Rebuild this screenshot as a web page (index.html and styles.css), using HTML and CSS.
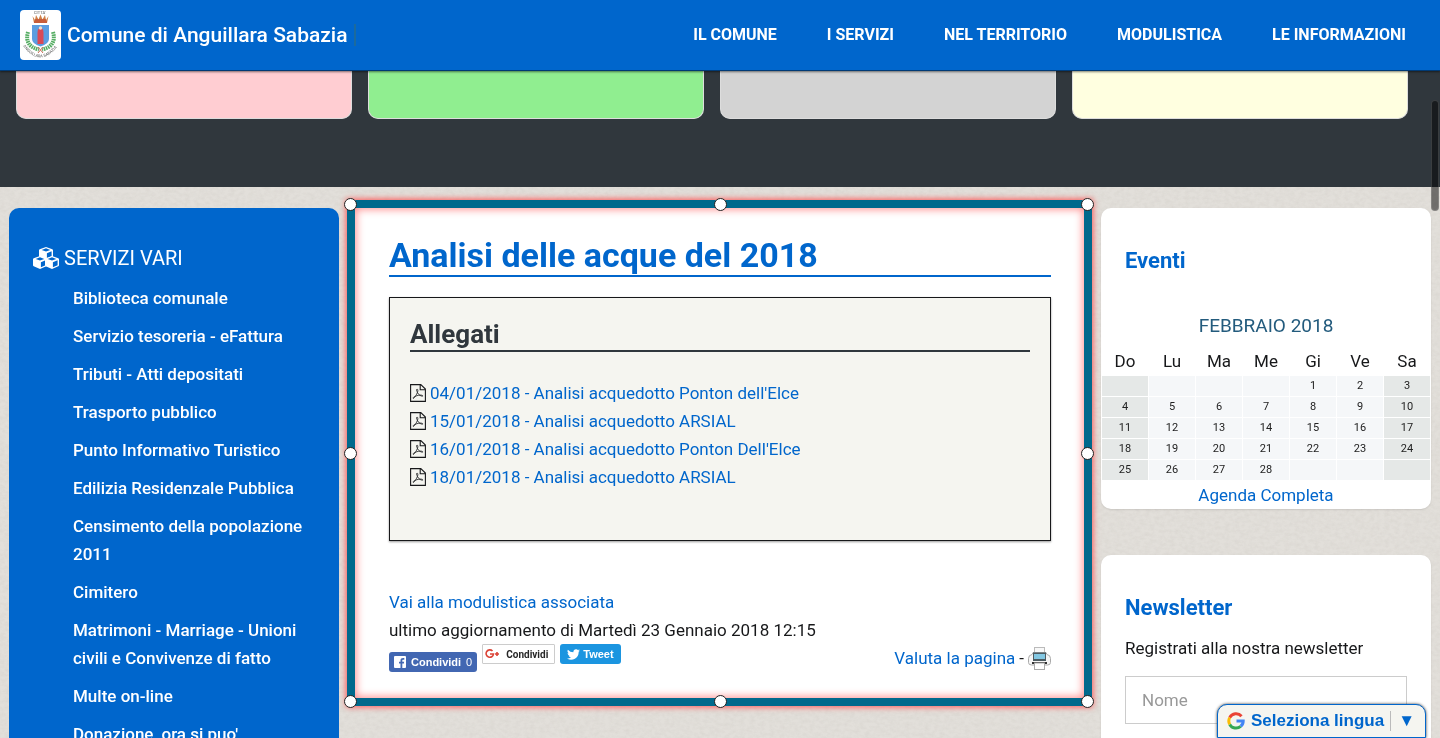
FILE: index.html
```html
<!DOCTYPE html>
<html lang="it">
<head>
  <meta charset="UTF-8">
  <title>Comune di Anguillara Sabazia</title>
  <meta name="viewport" content="width=device-width, initial-scale=1.0">
  <link rel="stylesheet" href="styles.css">
</head>
<body>
  <svg class="sprite" aria-hidden="true">
    <symbol id="pdf" viewBox="0 0 16 18">
      <path d="M.6.6h10.200l4.600 4.400v12.400H.6z M10.200.8v5h5" fill="none" stroke="currentColor" stroke-width="1.100"/>
      <path d="M7 5.200c2 0 .5 5-3.500 9.300-1-.2-.5-1.500 3-2.700s6.500-.8 6.300.3c-1.300.4-4.300-1-5.300-3.500S6.200 5.400 7 5.200z" fill="none" stroke="currentColor" stroke-width=".8"/>
    </symbol>
    <symbol id="cube" viewBox="0 0 14 13">
      <path d="M7 0l6.300 2.300q.7.300.7 1v5.900q0 .7-.7 1L7 13 .7 10.200q-.7-.3-.7-1V3.300q0-.7.7-1z" fill="#fff"/>
      <path d="M7 1.300l4.300 1.600L7 4.600 2.700 2.900z M7.900 6.200l4.700-1.900v4.900l-4.700 2z" fill="#06c"/>
    </symbol>
  </svg>

  <!-- stone texture behind the columns -->
  <svg class="texture" aria-hidden="true">
    <filter id="stone">
      <feTurbulence type="fractalNoise" baseFrequency=".2 .3" numOctaves="4" seed="3"/>
      <feColorMatrix values="0 0 0 0 .45  0 0 0 0 .42  0 0 0 0 .38  .25 0 0 0 -.09"/>
    </filter>
    <rect width="100%" height="100%" filter="url(#stone)"/>
  </svg>

  <header class="topbar">
    <a href="#" class="brand">
      <svg class="crest" viewBox="0 0 41 50" aria-hidden="true">
        <path id="scroll" d="M3 36Q20 59 38 36" fill="none"/>
        <text x="14" y="4" class="crest-text">CITTA'</text>
        <path d="M12.500 6l2.500 4 1-5 2.500 4.500 2-5 2 5L25 5l1 5 2.500-4-1.500 7H14z" fill="#cf8148"/>
        <path d="M14 12h13M15 10h11" stroke="#c0392b"/>
        <path d="M12 15h17v14q0 5-8.500 7.500Q12 34 12 29z" fill="#5b9de0"/>
        <path d="M17.500 23q0-5 3-5t3 5v11h-6z" fill="#d94a57"/>
        <circle cx="20.500" cy="18" r="1.700" fill="#f2dcc8"/>
        <path d="M8 22Q4 36 19 39.500M33 22Q37 36 22 39.500" fill="none" stroke="#55ad63" stroke-width="4" stroke-dasharray="1.600 .7"/>
        <path d="M18 37l5 6m0-6l-5 6" stroke="#d26b5b"/>
        <text class="crest-text"><textPath href="#scroll">ANGUILLARA SABAZIA</textPath></text>
      </svg>
      <span>Comune di Anguillara Sabazia</span>
      <i class="brand-line"></i>
    </a>
    <nav class="main-nav">
      <a href="#">IL COMUNE</a>
      <a href="#">I SERVIZI</a>
      <a href="#">NEL TERRITORIO</a>
      <a href="#">MODULISTICA</a>
      <a href="#">LE INFORMAZIONI</a>
    </nav>
  </header>

  <section class="banner">
    <div class="tile pink"></div>
    <div class="tile green"></div>
    <div class="tile grey"></div>
    <div class="tile yellow"></div>
  </section>

  <div class="columns">
    <aside class="services">
      <h2>
        <svg class="cubes" viewBox="0 0 26 22" aria-hidden="true">
          <use href="#cube" x="6" y="0" width="14" height="13"/>
          <use href="#cube" x="0" y="9" width="14" height="13"/>
          <use href="#cube" x="12" y="9" width="14" height="13"/>
        </svg>
        SERVIZI VARI
      </h2>
      <ul>
        <li><a href="#">Biblioteca comunale</a></li>
        <li><a href="#">Servizio tesoreria - eFattura</a></li>
        <li><a href="#">Tributi - Atti depositati</a></li>
        <li><a href="#">Trasporto pubblico</a></li>
        <li><a href="#">Punto Informativo Turistico</a></li>
        <li><a href="#">Edilizia Residenzale Pubblica</a></li>
        <li><a href="#">Censimento della popolazione 2011</a></li>
        <li><a href="#">Cimitero</a></li>
        <li><a href="#">Matrimoni - Marriage - Unioni civili e Convivenze di fatto</a></li>
        <li><a href="#">Multe on-line</a></li>
        <li><a href="#">Donazione, ora si puo'</a></li>
      </ul>
    </aside>

    <main class="content">
      <h1>Analisi delle acque del 2018</h1>
      <section class="attachments">
        <h2>Allegati</h2>
        <ul>
          <li><svg class="pdf"><use href="#pdf"/></svg><a href="#">04/01/2018 - Analisi acquedotto Ponton dell'Elce</a></li>
          <li><svg class="pdf"><use href="#pdf"/></svg><a href="#">15/01/2018 - Analisi acquedotto ARSIAL</a></li>
          <li><svg class="pdf"><use href="#pdf"/></svg><a href="#">16/01/2018 - Analisi acquedotto Ponton Dell'Elce</a></li>
          <li><svg class="pdf"><use href="#pdf"/></svg><a href="#">18/01/2018 - Analisi acquedotto ARSIAL</a></li>
        </ul>
      </section>
      <a href="#">Vai alla modulistica associata</a>
      <div>ultimo aggiornamento di Martedì 23 Gennaio 2018 12:15</div>
      <div class="page-tools">
        <div class="share">
          <button type="button" class="facebook">
            <svg width="12" height="12" viewBox="0 0 12 12" aria-hidden="true">
              <rect width="12" height="12" rx="1" fill="#fff"/>
              <path d="M8.300 12V7.500h1.600l.2-1.800H8.300V4.600c0-.6.2-.9 1-.9h1V2.100C8 1.800 6.500 2.300 6.500 4.400v1.300H5v1.800h1.500V12z" fill="#4267b2"/>
            </svg>
            <b>Condividi</b> <span>0</span>
          </button>
          <button type="button" class="gplus">
            <svg width="15" height="10" viewBox="0 0 15 10" fill="none" stroke="#db4437" stroke-width="1.600" aria-hidden="true">
              <path d="M7.500 2A3.700 3.700 0 1 0 8.500 5H5M10 5h4M12 3v4"/>
            </svg>
            <b>Condividi</b>
          </button>
          <button type="button" class="twitter">
            <svg width="13" height="11" viewBox="0 0 24 20" aria-hidden="true">
              <path d="M24 2.400a10 10 0 0 1-2.800.8A5 5 0 0 0 23.300.5a10 10 0 0 1-3.100 1.200A5 5 0 0 0 11.800 6 14 14 0 0 1 1.700 1a5 5 0 0 0 1.500 6.600A5 5 0 0 1 1 7a5 5 0 0 0 3.900 4.800 5 5 0 0 1-2.200.1 5 5 0 0 0 4.600 3.400A10 10 0 0 1 0 17.500a14 14 0 0 0 21.500-12.500A10 10 0 0 0 24 2.400z" fill="#fff"/>
            </svg>
            <b>Tweet</b>
          </button>
        </div>
        <div class="rate">
          <a href="#">Valuta la pagina</a> -
          <svg width="23" height="23" viewBox="0 0 23 23" role="img" aria-label="Stampa">
            <rect x="6.500" y=".5" width="10" height="8" fill="#f8f8f8" stroke="#bbb"/>
            <path d="M5 5.500h13l1 2q3.500.5 3.500 4v4q0 2.500-3 2.500h-16q-3 0-3-2.500v-4q0-3.500 3.500-4z" fill="#f5f5f5" stroke="#aaa"/>
            <rect x="5" y="5.500" width="13" height="8.500" fill="#4c5a60"/>
            <rect x="6" y="7" width="11" height="5" fill="#82c7e2"/>
            <path d="M4 16h15" stroke="#333" stroke-width="2"/>
            <rect x="6.500" y="16" width="10" height="6.500" fill="#fff" stroke="#aaa"/>
          </svg>
        </div>
      </div>
      <i class="handle top left"></i>
      <i class="handle top center"></i>
      <i class="handle top right"></i>
      <i class="handle middle left"></i>
      <i class="handle middle right"></i>
      <i class="handle bottom left"></i>
      <i class="handle bottom center"></i>
      <i class="handle bottom right"></i>
    </main>

    <aside class="side">
      <section class="card events">
        <h2>Eventi</h2>
        <table class="calendar">
          <caption>FEBBRAIO 2018</caption>
          <thead>
            <tr><th>Do</th><th>Lu</th><th>Ma</th><th>Me</th><th>Gi</th><th>Ve</th><th>Sa</th></tr>
          </thead>
          <tbody>
            <tr><td></td><td></td><td></td><td></td><td>1</td><td>2</td><td>3</td></tr>
            <tr><td>4</td><td>5</td><td>6</td><td>7</td><td>8</td><td>9</td><td>10</td></tr>
            <tr><td>11</td><td>12</td><td>13</td><td>14</td><td>15</td><td>16</td><td>17</td></tr>
            <tr><td>18</td><td>19</td><td>20</td><td>21</td><td>22</td><td>23</td><td>24</td></tr>
            <tr><td>25</td><td>26</td><td>27</td><td>28</td><td></td><td></td><td></td></tr>
          </tbody>
        </table>
        <a href="#" class="agenda">Agenda Completa</a>
      </section>
      <section class="card newsletter">
        <h2>Newsletter</h2>
        <label for="nome">Registrati alla nostra newsletter</label>
        <input type="text" id="nome" placeholder="Nome">
      </section>
    </aside>
  </div>

  <button type="button" class="language">
    <svg width="18" height="18" viewBox="0 0 18 18" fill="none" stroke-width="3" aria-hidden="true">
      <path d="M14.500 4.200A7.200 7.200 0 0 0 2.700 5.600" stroke="#ea4335"/>
      <path d="M2.700 5.600a7.200 7.200 0 0 0 0 6.800" stroke="#fbbc05"/>
      <path d="M2.700 12.400a7.200 7.200 0 0 0 11 1.900" stroke="#34a853"/>
      <path d="M13.700 14.300Q16.200 12.500 16.200 9H9.500" stroke="#4285f4"/>
    </svg>
    <span>Seleziona lingua</span>
    <span class="arrow">▼</span>
  </button>
  <i class="scroll-thumb"></i>
</body>
</html>
```
FILE: styles.css
```css
* {
  box-sizing: border-box;
}

body {
  margin: 0;
  height: 100vh;
  overflow: hidden;
  background-color: #e2dfda;
  color: #17181a;
  font: 17px/28px Roboto, "Liberation Sans", sans-serif;
}

a {
  color: #06c;
  text-decoration: none;
}

ul {
  list-style: none;
  margin: 0;
  padding: 0;
}

h1,
h2 {
  margin: 0;
}

.sprite {
  display: none;
}

.texture {
  position: fixed;
  inset: 0;
  z-index: -1;
  width: 100%;
  height: 100%;
}

/* header */
.topbar {
  position: relative;
  z-index: 2;
  display: flex;
  align-items: center;
  justify-content: space-between;
  height: 71px;
  padding: 0 34px 0 20px;
  background: #06c;
  border-bottom: 1px solid #003a75;
  box-shadow: 0 1px 2px rgba(0, 0, 0, 0.5);
}

.brand {
  display: flex;
  align-items: center;
  gap: 6px;
  color: #fff;
  font-size: 21px;
  font-weight: 500;
}

.crest {
  width: 41px;
  height: 50px;
  background: #fff;
  border-radius: 4px;
}

.crest-text {
  font-size: 4px;
  fill: #777;
}

.brand-line {
  width: 2px;
  height: 22px;
  background: #1c6a9c;
}

.main-nav {
  display: flex;
  gap: 50px;
}

.main-nav a {
  color: #fff;
  font-size: 16px;
  font-weight: 700;
}

.banner {
  display: flex;
  gap: 16px;
  height: 116px;
  padding: 0 32px 68px 16px;
  background: #30373d;
}

.tile {
  flex: 1;
  border: 1px solid #ddd;
  border-top: 0;
  border-radius: 0 0 10px 10px;
}

.pink {
  background: #ffcdd2;
}

.green {
  background: #90ee90;
}

.grey {
  background: #d3d3d3;
}

.yellow {
  background: #ffffe0;
}

/* columns */
.columns {
  display: flex;
  align-items: flex-start;
  padding: 13px 9px 0;
}

.services,
.side {
  flex: 0 0 330px;
  margin-top: 8px;
}

.services {
  padding: 36px 32px 0 24px;
  background: #06c;
  border-radius: 10px 10px 0 0;
}

.services h2 {
  display: flex;
  align-items: center;
  gap: 5px;
  color: #fff;
  font-size: 20px;
  font-weight: 400;
}

.cubes {
  width: 26px;
  height: 22px;
}

.services ul {
  padding: 12px 0 0 40px;
}

.services li {
  margin-bottom: 10px;
}

.services a {
  color: #fff;
  font-weight: 500;
}

.content {
  position: relative;
  flex: 1;
  margin: 0 9px 0 8px;
  padding: 27px 33px 26px 34px;
  background: #fff;
  border: 8px solid #00698c;
  box-shadow: 0 0 6px 1px #f55, inset 0 0 8px 1px #f88;
}

.content h1 {
  margin-bottom: 20px;
  color: #06c;
  border-bottom: 2px solid #06c;
  font-size: 34px;
  line-height: 40px;
}

.attachments {
  margin-bottom: 47px;
  padding: 20px 20px 49px;
  background: #f5f5f0;
  border: 1px solid #17181a;
  box-shadow: 0 1px 2px rgba(0, 0, 0, 0.4);
}

.attachments h2 {
  margin-bottom: 27px;
  color: #30373d;
  border-bottom: 2px solid #30373d;
  font-size: 26px;
  line-height: 32px;
}

.attachments li {
  display: flex;
  align-items: center;
  gap: 4px;
}

.pdf {
  width: 16px;
  height: 18px;
}

.page-tools,
.share,
.share button,
.rate {
  display: flex;
  align-items: center;
}

.page-tools {
  justify-content: space-between;
}

.share {
  align-items: flex-start;
  gap: 5px;
  height: 28px;
}

.share button {
  height: 20px;
  border: 0;
  border-radius: 3px;
  white-space: nowrap;
}

.share .facebook {
  align-self: flex-end;
  gap: 5px;
  padding: 0 5px;
  color: #fff;
  background: #4267b2;
  font: 11px "Liberation Sans", sans-serif;
}

.share .gplus {
  gap: 6px;
  padding: 0 6px 0 2px;
  color: #262626;
  background: #fff;
  border: 1px solid #ccc;
  border-radius: 1px;
  font: 10px Roboto, sans-serif;
}

.share .twitter {
  gap: 3px;
  padding: 0 7px;
  color: #fff;
  background: #1b95e0;
  font: 11px "Liberation Sans", sans-serif;
}

.rate {
  gap: 4px;
}

.handle {
  position: absolute;
  width: 13px;
  height: 13px;
  background: #fff;
  border: 1px solid #222;
  border-radius: 50%;
}

.top {
  top: -10px;
}

.middle {
  top: calc(50% - 6px);
}

.bottom {
  bottom: -10px;
}

.left {
  left: -11px;
}

.center {
  left: calc(50% - 6px);
}

.right {
  right: -10px;
}

/* right column */
.card {
  margin-bottom: 46px;
  background: #fff;
  border-radius: 10px;
  box-shadow: 0 1px 2px rgba(0, 0, 0, 0.1);
}

.card h2 {
  padding: 39px 24px 0;
  color: #06c;
  font-size: 22px;
}

.calendar {
  width: 100%;
  margin-top: 37px;
  border-spacing: 1px;
  table-layout: fixed;
}

.calendar caption {
  padding-bottom: 6px;
  color: #235b7d;
  font-size: 19px;
}

.calendar th {
  padding: 0;
  font-weight: 400;
}

.calendar td {
  height: 20px;
  padding: 0;
  background: #f5f7f9;
  color: #222;
  font-size: 11px;
  line-height: 20px;
  text-align: center;
}

.calendar td:first-child,
.calendar td:last-child {
  background: #e5e8e7;
}

.agenda {
  display: block;
  text-align: center;
}

.newsletter {
  padding-bottom: 40px;
}

.newsletter label {
  display: block;
  padding: 12px 24px 14px;
}

.newsletter input {
  display: block;
  width: calc(100% - 48px);
  height: 48px;
  margin: 0 24px;
  padding: 0 16px;
  border: 1px solid #ccc;
  font: inherit;
}

.newsletter input::placeholder {
  color: #999;
}

.language {
  position: fixed;
  right: 14px;
  bottom: 0;
  z-index: 3;
  display: flex;
  align-items: center;
  gap: 6px;
  height: 34px;
  padding: 0 10px 0 9px;
  color: #06c;
  background: #f5f5f0;
  border: 1px solid #06c;
  border-radius: 10px 10px 0 0;
  box-shadow: 0 0 3px #333;
  font: bold 17px "Liberation Sans", sans-serif;
}

.arrow {
  padding-left: 7px;
  border-left: 1px solid #bbb;
}

.scroll-thumb {
  position: fixed;
  top: 100px;
  right: 1px;
  z-index: 4;
  width: 8px;
  height: 111px;
  background: rgba(0, 0, 0, 0.5);
  border: 1px solid rgba(255, 255, 255, 0.15);
  border-radius: 4px;
}
```
